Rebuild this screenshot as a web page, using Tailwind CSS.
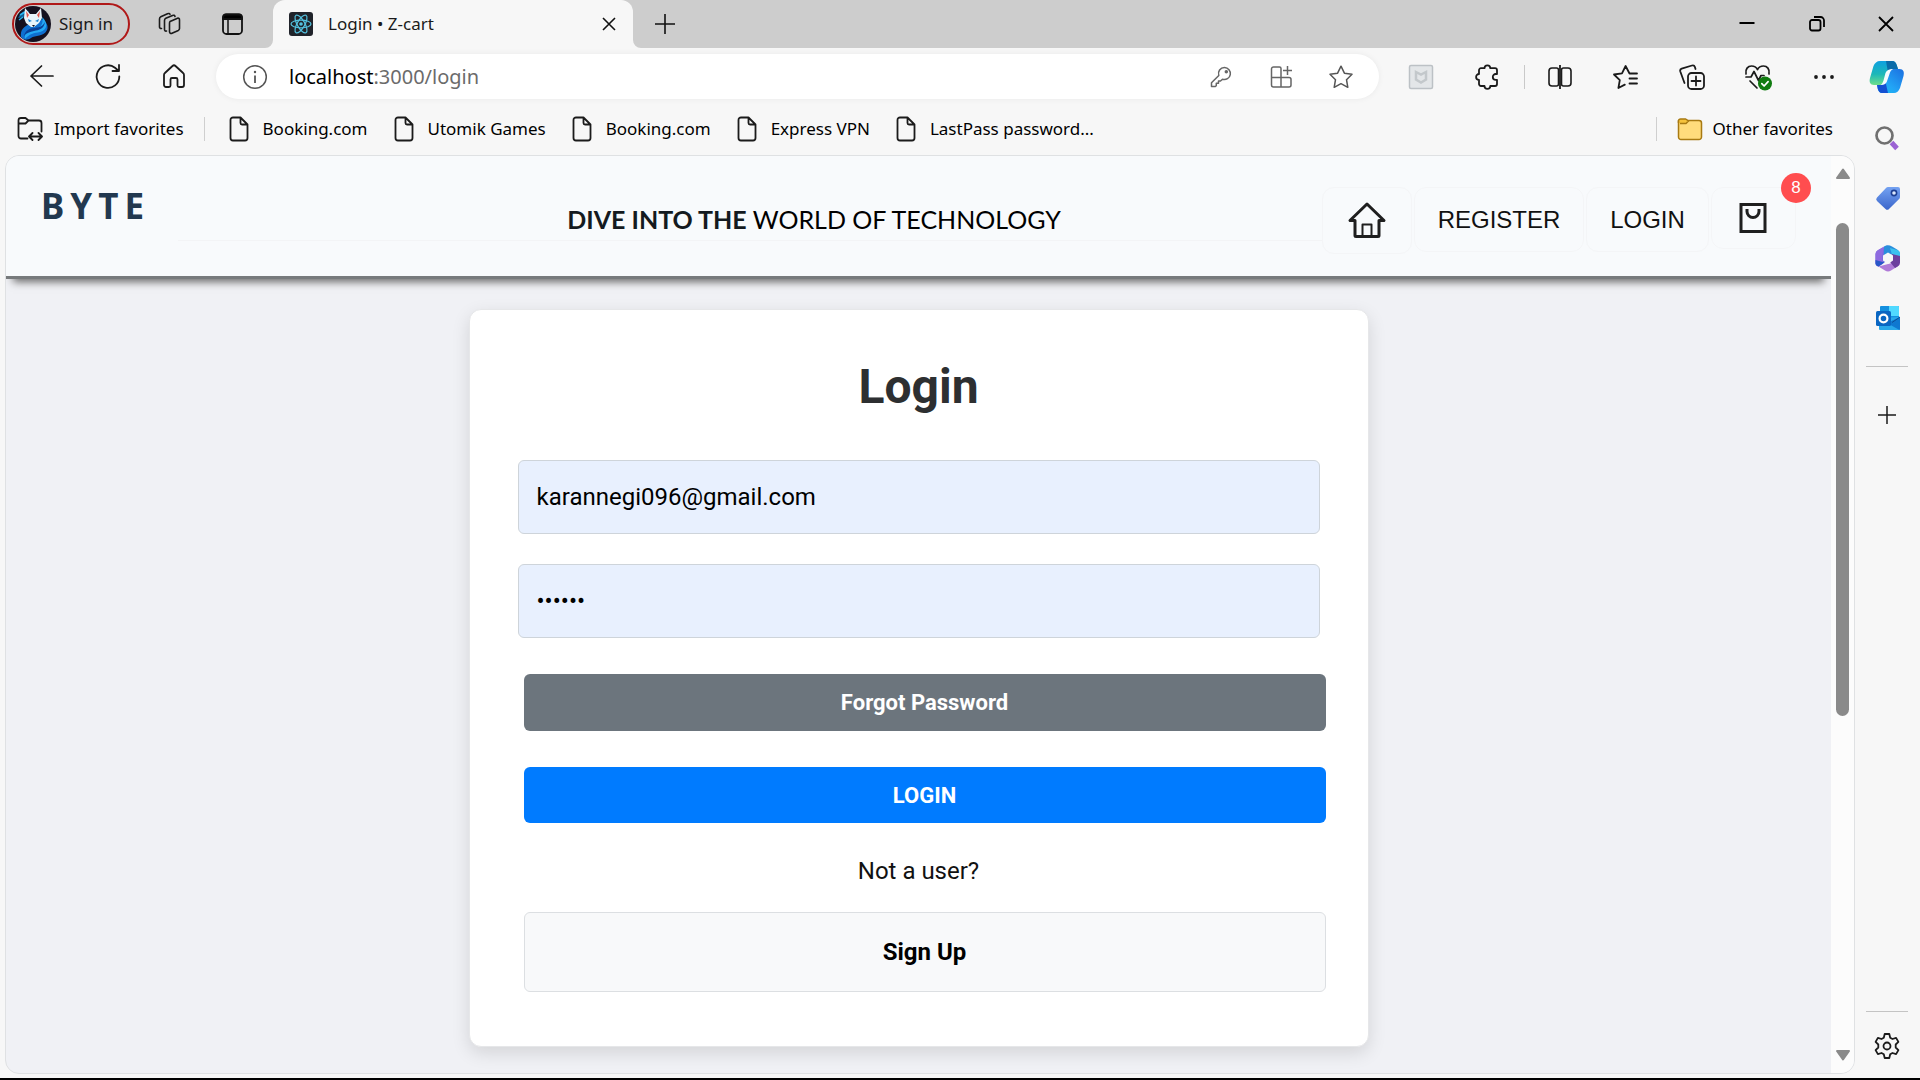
<!DOCTYPE html>
<html lang="en">
<head>
<meta charset="utf-8">
<title>Login • Z-cart</title>
<script src="https://cdn.jsdelivr.net/npm/@tailwindcss/browser@4"></script>
</head>
<body class="flex h-screen flex-col overflow-hidden border-b-2 border-black bg-[#f7f7f7] font-['Noto_Sans','Open_Sans',sans-serif] text-[17px] text-[#1b1b1b]">

<!-- Title bar -->
<header class="flex h-12 shrink-0 items-center bg-[#cdcdcd]">
  <button type="button" class="ml-3 flex h-[42px] w-[118px] shrink-0 items-center gap-2 rounded-full border-2 border-[#b01818] pl-px text-[17px]">
    <svg class="size-9 shrink-0" viewBox="0 0 36 36" aria-hidden="true">
      <defs><clipPath id="av"><circle cx="18" cy="18" r="18"/></clipPath></defs>
      <g clip-path="url(#av)">
        <rect width="36" height="36" fill="#14101f"/>
        <path d="M3 12c3-7 8-8 11-7l-4 6z" fill="#0e5f96"/>
        <path d="M5 9l5-3M4 14l4-3" stroke="#27b3ef" stroke-width="1.5"/>
        <path d="M6 31c-1-7 3-11 9-13l11-5c5 2 8 7 6 11-3 7-12 5-16 8-3 2-7 3-10-1z" fill="#0f6fd0"/>
        <path d="M27 11c6 5 6 13-2 15-6 1-11 2-15 7-1-5 2-9 8-10 7-1 11-4 9-12z" fill="#23a8f5"/>
        <path d="M9 30c1-5 5-8 11-8 5-1 8-2 10-6-1 7-6 8-11 9-4 1-8 2-10 5z" fill="#0a3f96"/>
        <path d="M10 2l5 6h6l5-6 1 10-3 5-5 4-3 0-5-4-2-5z" fill="#e8f4fb"/>
        <path d="M11 5l3 4-2 3zM25 5l-3 4 2 3z" fill="#e2574c"/>
        <path d="M13 13l4 2-3 1zM24 13l-4 2 3 1z" fill="#1b86d6"/>
        <path d="M17 19h3l-1.500 2z" fill="#14101f"/>
      </g>
    </svg>
    <span>Sign in</span>
  </button>
  <button type="button" aria-label="Workspaces" class="ml-[26px]">
    <svg class="size-[26px]" viewBox="0 0 26 26" fill="none" stroke="#1b1b1b" stroke-width="1.600" stroke-linejoin="round" stroke-linecap="round">
      <path d="M14 10.500l7-3a1.500 1.500 0 0 1 2.500 1.300v8.700c0 .9-.4 1.500-1.200 1.900l-6.300 2.900a1.700 1.700 0 0 1-2.500-1.500v-8c0-1 .1-1.900.5-2.300z"/>
      <path d="M10.500 20c-1.200.3-2-.4-2-1.500v-9c0-1.200.4-1.900 1.300-2.300l6.700-2.800c1.300-.5 2.300 0 2.500 1.100"/>
      <path d="M5.500 17.500c-1.200.2-2-.5-2-1.500v-8c0-1.200.4-1.900 1.300-2.300l6.700-3c1.200-.5 2.200-.2 2.500.6"/>
    </svg>
  </button>
  <button type="button" aria-label="Tab actions" class="ml-[37px]">
    <svg class="size-[26px]" viewBox="0 0 26 26" fill="none" stroke="#111" stroke-width="1.800">
      <rect x="4" y="3.500" width="19" height="19.500" rx="3.500"/><path d="M4 8V6.500a3 3 0 0 1 3-3h13a3 3 0 0 1 3 3V8z" fill="#000"/><path d="M9 9v14" stroke-width="1.500"/>
    </svg>
  </button>
  <div class="relative ml-[28px] flex h-12 w-[360px] shrink-0 items-center rounded-t-[12px] bg-[#f7f7f7] px-4">
    <svg class="absolute bottom-0 -left-2 size-2" viewBox="0 0 8 8" aria-hidden="true"><path d="M8 0v8H0a8 8 0 0 0 8-8z" fill="#f7f7f7"/></svg>
    <svg class="absolute -right-2 bottom-0 size-2" viewBox="0 0 8 8" aria-hidden="true"><path d="M0 0v8h8a8 8 0 0 1-8-8z" fill="#f7f7f7"/></svg>
    <svg class="size-6" viewBox="0 0 24 24" fill="none" stroke="#53c1de" stroke-width="1.200" aria-hidden="true">
      <rect width="24" height="24" rx="3" fill="#20232a" stroke="none"/>
      <ellipse cx="12" cy="12" rx="10" ry="3.800"/><ellipse cx="12" cy="12" rx="10" ry="3.800" transform="rotate(60 12 12)"/><ellipse cx="12" cy="12" rx="10" ry="3.800" transform="rotate(120 12 12)"/>
      <circle cx="12" cy="12" r="1.800" fill="#53c1de" stroke="none"/>
    </svg>
    <span class="ml-[15px] grow">Login • Z-cart</span>
    <button type="button" aria-label="Close tab"><svg class="size-4" viewBox="0 0 16 16" stroke="#111" stroke-width="1.600"><path d="M2 2l12 12M14 2L2 14"/></svg></button>
  </div>
  <button type="button" aria-label="New tab" class="ml-5"><svg class="size-6" viewBox="0 0 24 24" stroke="#111" stroke-width="1.600"><path d="M2 12h20M12 2v20"/></svg></button>
  <div class="ml-auto flex">
    <button type="button" aria-label="Minimize" class="flex w-[70px] justify-center"><svg class="size-5" viewBox="0 0 20 20" stroke="#000" stroke-width="2"><path d="M2.500 9h15"/></svg></button>
    <button type="button" aria-label="Restore" class="flex w-[70px] justify-center"><svg class="size-5" viewBox="0 0 20 20" fill="none" stroke="#000" stroke-width="1.800"><rect x="3" y="6" width="10.500" height="10.500" rx="2"/><path d="M7 3h6.500A3.500 3.500 0 0 1 17 6.500V13"/></svg></button>
    <button type="button" aria-label="Close" class="flex w-[68px] justify-center"><svg class="size-5" viewBox="0 0 20 20" stroke="#000" stroke-width="1.800"><path d="M3 3l14 14M17 3L3 17"/></svg></button>
  </div>
</header>

<div class="flex min-h-0 grow">
  <div class="flex min-w-0 grow flex-col">

    <!-- Address bar -->
    <div class="flex h-14 shrink-0 items-center pt-px pl-[9px]">
      <button type="button" aria-label="Back" class="flex w-[66px] justify-center"><svg class="size-7" viewBox="0 0 28 28" fill="none" stroke="#1b1b1b" stroke-width="1.700" stroke-linecap="round" stroke-linejoin="round"><path d="M25 13H3M13.500 3L3 13l10.500 10"/></svg></button>
      <button type="button" aria-label="Refresh" class="flex w-[66px] justify-center"><svg class="size-7" viewBox="0 0 28 28" fill="none" stroke="#1b1b1b" stroke-width="1.800" stroke-linecap="round" stroke-linejoin="round"><path d="M25.300 13.500A11.300 11.300 0 1 1 21 4.700l3.500 3M25 2v6h-6.500"/></svg></button>
      <button type="button" aria-label="Home" class="flex w-[66px] justify-center"><svg class="size-7" viewBox="0 0 28 28" fill="none" stroke="#1b1b1b" stroke-width="1.800" stroke-linejoin="round"><path d="M12.500 3a2.200 2.200 0 0 1 3 0l7.600 7c.7.600.9 1.200.9 2v10a2 2 0 0 1-2 2h-3a1.500 1.500 0 0 1-1.500-1.500v-6A1.500 1.500 0 0 0 16 15h-4a1.500 1.500 0 0 0-1.500 1.500v6A1.500 1.500 0 0 1 9 24H6a2 2 0 0 1-2-2v-10c0-.8.2-1.400.9-2z"/></svg></button>
      <div class="ml-[9px] flex h-[45px] grow items-center rounded-full bg-white pr-2 pl-[26px] shadow-[0_0_6px_rgba(0,0,0,0.06)]">
        <svg class="size-[26px] shrink-0" viewBox="0 0 26 26" fill="none" stroke="#555" stroke-width="1.500" aria-hidden="true"><circle cx="13" cy="13" r="11.300"/><path d="M13 11.500v7.500" stroke-width="1.800"/><circle cx="13" cy="8" r="1.200" fill="#555" stroke="none"/></svg>
        <span class="ml-[21px] grow text-[20px] text-[#6b6b6b]"><span class="text-black">localhost</span>:3000/login</span>
        <button type="button" aria-label="Passwords" class="flex w-[60px] justify-center"><svg class="size-6" viewBox="0 0 24 24" fill="none" stroke="#666" stroke-width="1.500" stroke-linejoin="round"><path d="M15.500 2.500a6 6 0 1 1-2 11.700L11.500 16H9.500v2.300H7.300v2.300L6.300 21.500H2.500v-3.700l7.300-7.300a6 6 0 0 1 5.700-8z"/><circle cx="17.300" cy="6.800" r="1" fill="#666"/></svg></button>
        <button type="button" aria-label="Apps" class="flex w-[60px] justify-center"><svg class="size-6" viewBox="0 0 24 24" fill="none" stroke="#666" stroke-width="1.500" stroke-linejoin="round"><path d="M12 12.500V3.500a1.500 1.500 0 0 0-1.500-1.500h-6A2 2 0 0 0 2.500 4v16a2 2 0 0 0 2 2H20a2 2 0 0 0 2-2v-5.500a2 2 0 0 0-2-2H2.500M12 12.500V22M18.500 1v9M14 5.500h9"/></svg></button>
        <button type="button" aria-label="Add to favorites" class="flex w-[60px] justify-center"><svg class="size-[26px]" viewBox="0 0 26 26" fill="none" stroke="#555" stroke-width="1.500" stroke-linejoin="round"><path d="M13 2.200l3.400 7 7.600 1.100-5.500 5.400 1.300 7.600-6.800-3.600-6.800 3.600 1.300-7.600L2 10.300l7.600-1.100z"/></svg></button>
      </div>
      <div class="ml-[9px] flex shrink-0 items-center pr-px">
        <button type="button" aria-label="Web protection" class="flex w-[66px] justify-center"><svg class="size-[26px]" viewBox="0 0 26 26" fill="none" stroke="#bcc1c5" stroke-width="1.500"><rect x="1.500" y="1.500" width="23" height="23" rx="1.500" fill="#e3e6e8"/><path d="M8 8l5 2.500L18 8v7.500L13 18.500 8 15.500z" stroke="#c3c8cb" stroke-width="2.500"/></svg></button>
        <button type="button" aria-label="Extensions" class="flex w-[66px] justify-center"><svg class="size-[26px]" viewBox="0 0 26 26" fill="none" stroke="#1b1b1b" stroke-width="1.800" stroke-linejoin="round"><path d="M10.500 4.200a2.900 2.900 0 0 1 5.800 0H21a2 2 0 0 1 2 2V10h-1.300a2.900 2.900 0 0 0 0 5.800H23v4.200a2 2 0 0 1-2 2h-4.700a2.900 2.900 0 0 1-5.800 0H7a2 2 0 0 1-2-2v-4.200a2.900 2.900 0 0 1 0-5.800V6.200a2 2 0 0 1 2-2z"/></svg></button>
        <div class="mr-[2px] ml-1 h-6 w-px bg-[#c9c9c9]"></div>
        <button type="button" aria-label="Split screen" class="flex w-[66px] justify-center"><svg class="size-[26px]" viewBox="0 0 26 26" fill="none" stroke="#1b1b1b" stroke-width="1.800" stroke-linejoin="round"><path d="M9.500 4H5a3 3 0 0 0-3 3v12a3 3 0 0 0 3 3h4.500a2 2 0 0 0 2-2V6a2 2 0 0 0-2-2zM16.500 4H21a3 3 0 0 1 3 3v12a3 3 0 0 1-3 3h-4.500a2 2 0 0 1-2-2V6a2 2 0 0 1 2-2z" stroke-width="1.600"/><path d="M13 1v24"/></svg></button>
        <button type="button" aria-label="Favorites" class="flex w-[66px] justify-center"><svg class="size-[26px]" viewBox="0 0 26 26" fill="none" stroke="#1b1b1b" stroke-width="1.800" stroke-linejoin="round" stroke-linecap="round"><path d="M24 9.500h-7.500L12.600 2 9 9.300l-8 1.200 5.800 5.600L5.400 24l6.400-3.400M16.500 14.500H24M16.500 19.500H24"/></svg></button>
        <button type="button" aria-label="Collections" class="flex w-[66px] justify-center"><svg class="size-[26px]" viewBox="0 0 26 26" fill="none" stroke="#1b1b1b" stroke-width="1.800" stroke-linejoin="round" stroke-linecap="round"><rect x="9" y="9" width="16" height="16" rx="3.500"/><path d="M17 12.500v9M12.500 17h9M5.500 19L1.300 7.500c-.4-1.300.2-2.400 1.400-2.800L13 1.500c1.400-.4 2.500.3 2.900 1.500L16.500 5"/></svg></button>
        <button type="button" aria-label="Browser essentials" class="flex w-[66px] justify-center"><svg class="size-7" viewBox="0 0 28 28" fill="none" stroke="#1b1b1b" stroke-width="1.700" stroke-linejoin="round" stroke-linecap="round"><path d="M2 11C1 6 4 3 7.500 3 10.500 3 12.500 4.500 13.500 6.500 14.500 4.500 16.500 3 19.500 3 23 3 26 6 25 11M2 14h5l3-5.500 4.500 9 2.500-5h3M6 18l7 7"/><circle cx="21" cy="20.500" r="7" fill="#107c10" stroke="none"/><path d="M17.800 20.700l2.300 2.300 4-4.300" stroke="#fff"/></svg></button>
        <button type="button" aria-label="Settings and more" class="flex w-[66px] justify-center"><svg class="size-6" viewBox="0 0 24 24" fill="#1b1b1b"><circle cx="4" cy="12" r="1.900"/><circle cx="12" cy="12" r="1.900"/><circle cx="20" cy="12" r="1.900"/></svg></button>
      </div>
    </div>

    <!-- Favorites bar -->
    <nav aria-label="Favorites bar" class="flex h-[51px] shrink-0 items-center pb-px pr-[25px] pl-[17px] whitespace-nowrap text-black">
      <button type="button" class="flex items-center gap-[11px]"><svg class="size-[26px]" viewBox="0 0 26 26" fill="none" stroke="#1b1b1b" stroke-width="1.800" stroke-linejoin="round" stroke-linecap="round"><path d="M10.500 22.500H4a2.500 2.500 0 0 1-2.500-2.500V4.500A2.500 2.500 0 0 1 4 2h4.500l3 2.500H22A2.500 2.500 0 0 1 24.500 7v8.500M1.500 7.500h7l3-3M12.500 20.500h12M15.500 17l-3.500 3.500 3.500 3.500M21.500 17l3.500 3.500-3.500 3.500"/></svg>Import favorites</button>
      <div class="mr-[24px] ml-[20px] h-6 w-px bg-[#cfcfcf]"></div>
      <div class="flex gap-[26px]">
        <a href="#" class="flex items-center gap-[14px]"><svg class="h-[26px] w-5" viewBox="0 0 20 26" fill="none" stroke="#1b1b1b" stroke-width="1.800" stroke-linejoin="round"><path d="M11.500 1.500H4a2.500 2.500 0 0 0-2.500 2.500v18A2.500 2.500 0 0 0 4 24.500h12a2.500 2.500 0 0 0 2.500-2.500V8.500zM11.500 1.500V7a1.500 1.500 0 0 0 1.500 1.500h5.500"/></svg>Booking.com</a>
        <a href="#" class="flex items-center gap-[14px]"><svg class="h-[26px] w-5" viewBox="0 0 20 26" fill="none" stroke="#1b1b1b" stroke-width="1.800" stroke-linejoin="round"><path d="M11.500 1.500H4a2.500 2.500 0 0 0-2.500 2.500v18A2.500 2.500 0 0 0 4 24.500h12a2.500 2.500 0 0 0 2.500-2.500V8.500zM11.500 1.500V7a1.500 1.500 0 0 0 1.500 1.500h5.500"/></svg>Utomik Games</a>
        <a href="#" class="flex items-center gap-[14px]"><svg class="h-[26px] w-5" viewBox="0 0 20 26" fill="none" stroke="#1b1b1b" stroke-width="1.800" stroke-linejoin="round"><path d="M11.500 1.500H4a2.500 2.500 0 0 0-2.500 2.500v18A2.500 2.500 0 0 0 4 24.500h12a2.500 2.500 0 0 0 2.500-2.500V8.500zM11.500 1.500V7a1.500 1.500 0 0 0 1.500 1.500h5.500"/></svg>Booking.com</a>
        <a href="#" class="flex items-center gap-[14px]"><svg class="h-[26px] w-5" viewBox="0 0 20 26" fill="none" stroke="#1b1b1b" stroke-width="1.800" stroke-linejoin="round"><path d="M11.500 1.500H4a2.500 2.500 0 0 0-2.500 2.500v18A2.500 2.500 0 0 0 4 24.500h12a2.500 2.500 0 0 0 2.500-2.500V8.500zM11.500 1.500V7a1.500 1.500 0 0 0 1.500 1.500h5.500"/></svg>Express VPN</a>
        <a href="#" class="flex items-center gap-[14px]"><svg class="h-[26px] w-5" viewBox="0 0 20 26" fill="none" stroke="#1b1b1b" stroke-width="1.800" stroke-linejoin="round"><path d="M11.500 1.500H4a2.500 2.500 0 0 0-2.500 2.500v18A2.500 2.500 0 0 0 4 24.500h12a2.500 2.500 0 0 0 2.500-2.500V8.500zM11.500 1.500V7a1.500 1.500 0 0 0 1.500 1.500h5.500"/></svg>LastPass password...</a>
      </div>
      <div class="mr-[20px] ml-auto h-6 w-px bg-[#cfcfcf]"></div>
      <button type="button" class="flex items-center gap-[9px]"><svg class="size-[26px]" viewBox="0 0 26 26" fill="#ffdc7c" stroke="#a87a12" stroke-width="1.500" stroke-linejoin="round"><path d="M1.500 4.500V21A2.500 2.500 0 0 0 4 23.500h18a2.500 2.500 0 0 0 2.500-2.500V7A2.500 2.500 0 0 0 22 4.500H11.500z"/><path d="M1.500 7V5A2 2 0 0 1 3.500 3h5.200l2.800 2L9 7.500H3" fill="#f5c23b"/></svg>Other favorites</button>
    </nav>

    <!-- Page viewport -->
    <div class="mr-[3px] mb-1 ml-[5px] flex min-h-0 grow overflow-hidden rounded-[14px] border border-[#dfe1e3] bg-[#f0f1f5]">
      <div class="min-w-0 grow overflow-hidden">
        <div class="flex h-[123px] items-start border-b-[3px] border-[#777a7c] bg-[#f8fafc] pr-[35px] shadow-[0_10px_8px_-7px_#6b6b6b]">
          <a href="#" class="mt-[25px] w-[172px] pl-[35px] font-['Noto_Sans',sans-serif] text-[35px] leading-[50px] font-bold tracking-[6px] text-[#22384f]">BYTE</a>
          <div class="mt-[43px] h-[42px] grow border-b border-[#f3f4f6] pl-[128px] text-center font-['Lato',sans-serif] text-[25px] leading-[40px] whitespace-nowrap text-black"><b class="text-[#141a20]">DIVE INTO THE</b> WORLD OF TECHNOLOGY</div>
          <nav aria-label="Site" class="mt-[31px] flex items-start gap-[2px] font-['Liberation_Sans',sans-serif] text-[24px] text-[#111]">
            <a href="#" aria-label="Home" class="flex h-[67px] w-[90px] items-center justify-center rounded-[12px] border border-[#f4f5f7]"><svg class="size-10" viewBox="0 0 40 40" fill="none" stroke="#1f1f1f" stroke-width="3" stroke-linejoin="round" stroke-linecap="round"><path d="M3 19.500L20 3l17 16.500M3.500 19.500H8V34.500a1 1 0 0 0 1 1h22a1 1 0 0 0 1-1V19.500h4.500"/><path d="M15.500 35V23.500h9V35" stroke-width="2"/></svg></a>
            <a href="#" class="flex h-[65px] w-[170px] items-center justify-center rounded-[12px] border border-[#f4f5f7]">REGISTER</a>
            <a href="#" class="flex h-[65px] w-[123px] items-center justify-center rounded-[12px] border border-[#f4f5f7]">LOGIN</a>
            <a href="#" aria-label="Cart" class="relative flex h-[62px] w-[85px] items-center justify-center rounded-[12px] border border-[#f4f5f7]"><svg class="size-8" viewBox="0 0 32 32" fill="none" stroke="#1f1f1f" stroke-width="3"><rect x="3" y="2.500" width="24" height="27"/><path d="M9 7v2.500a6 6 0 0 0 12 0V7"/></svg>
              <span class="absolute -top-[15px] -right-4 flex size-[30px] items-center justify-center rounded-full bg-[#ff4d4f] text-[17px] text-white">8</span></a>
          </nav>
        </div>

        <main class="px-4 pt-[30px] font-['Roboto',sans-serif] text-[24px] text-[#111]">
          <form class="mx-auto flex max-w-[900px] flex-col rounded-[12px] border border-[#e6e7e9] bg-white px-12 pt-[49px] pb-[54px] shadow-[0_6px_18px_rgba(0,0,0,0.12)]">
            <h1 class="text-center text-[48px] leading-[56px] font-bold text-[#2d2f31]">Login</h1>
            <input aria-label="Email" type="email" value="karannegi096@gmail.com" class="mt-[45px] h-[74px] rounded-[6px] border border-[#ced4da] bg-[#e8f0fe] px-[18px] text-black">
            <input aria-label="Password" type="password" value="secret" class="mt-[30px] h-[74px] rounded-[6px] border border-[#ced4da] bg-[#e8f0fe] px-[18px] text-black">
            <button type="button" class="mt-[36px] -mr-[6px] ml-[6px] h-[57px] rounded-[6px] bg-[#6c757d] text-[22px] font-bold text-white">Forgot Password</button>
            <button type="submit" class="mt-[36px] -mr-[6px] ml-[6px] h-[56px] rounded-[6px] bg-[#007bff] text-[22px] font-bold text-white">LOGIN</button>
            <p class="mt-[30px] text-center leading-[36px]">Not a user?</p>
            <button type="button" class="mt-[23px] -mr-[6px] ml-[6px] h-[80px] rounded-[6px] border border-[#dcdfe2] bg-[#f8f9fa] font-bold text-black">Sign Up</button>
          </form>
        </main>
      </div>
      <div class="flex w-[23px] shrink-0 flex-col items-center bg-[#fcfcfc] py-3" aria-hidden="true">
        <svg class="h-3 w-4" viewBox="0 0 16 12"><path d="M8 1.500l6 8.500H2z" fill="#8a8a8a" stroke="#8a8a8a" stroke-width="2" stroke-linejoin="round"/></svg>
        <div class="mt-[43px] h-[493px] w-[13px] rounded-full bg-[#8a8a8a]"></div>
        <svg class="mt-auto h-3 w-4" viewBox="0 0 16 12"><path d="M8 10.500L2 2h12z" fill="#8a8a8a" stroke="#8a8a8a" stroke-width="2" stroke-linejoin="round"/></svg>
      </div>
    </div>
  </div>

  <!-- Sidebar -->
  <aside class="flex w-[62px] shrink-0 flex-col items-center pt-[11px] pr-1 pb-[18px]">
    <button type="button" aria-label="Copilot"><svg class="size-9" viewBox="0 0 36 36">
      <defs>
        <linearGradient id="c1" x1="0" y1="0" x2="0" y2="1"><stop offset="0" stop-color="#0fa0e0"/><stop offset=".55" stop-color="#1cb8b8"/><stop offset="1" stop-color="#6ddf8a"/></linearGradient>
        <linearGradient id="c2" x1="1" y1="0" x2="0" y2="1"><stop offset="0" stop-color="#1c6fe0"/><stop offset=".6" stop-color="#22a4f5"/><stop offset="1" stop-color="#19c0f0"/></linearGradient>
      </defs>
      <path d="M15 2h8c3 0 4 2 4.700 4l1.300 4h-5c-3 0-4.500 2-5.500 5l-2.500 8c-.9 2-2 3-4.500 3H5c-4 0-5-3-4-7L4.500 7C5.500 4 8 2 11 2z" fill="url(#c1)"/>
      <path d="M17 2h6c3 0 4 2 4.700 4l1.300 4h-5c-2.500 0-4 1.200-5 3.500z" fill="#0b6ba8"/>
      <path d="M21 34h-8c-2.500 0-3.500-2-4.200-4l-.8-4h4c2.500 0 3.700-1 4.500-3l3-9c1-3 2.500-4 5-4h6c4 0 5 3 4 7l-3.500 12c-1 3-3.500 5-6 5z" fill="url(#c2)"/>
      <path d="M19 34h-6c-2.500 0-3.500-2-4.200-4l-.8-4h4c2.500 0 3.700-1 4.500-3z" fill="#1450d2"/>
      <path d="M16.500 14c1-2.700 3.500-4 7.500-4-2 1-2.800 2.800-3.600 5.200l-2.600 7.600c-.9 2.300-3 3.200-6.300 3.200 1.600-1 2.200-2.200 3-4.500z" fill="#f4fbff"/>
    </svg></button>
    <button type="button" aria-label="Search" class="mt-[30px]"><svg class="size-[26px]" viewBox="0 0 26 26" fill="none"><circle cx="10.500" cy="10.500" r="8" stroke="#707070" stroke-width="2.700"/><path d="M17.500 17.500l5.500 6" stroke="#9b62d3" stroke-width="5"/></svg></button>
    <button type="button" aria-label="Shopping" class="mt-[34px] ml-px"><svg class="size-[26px]" viewBox="0 0 26 26"><defs><linearGradient id="t" x1="0" y1="0" x2="0" y2="1"><stop offset="0" stop-color="#74a2f2"/><stop offset="1" stop-color="#3b66cb"/></linearGradient></defs><path d="M13 2h10a2 2 0 0 1 2 2v8a3 3 0 0 1-.9 2.100L14 24a2.500 2.500 0 0 1-3.500 0L2 16a2.500 2.500 0 0 1 0-3.500L11 3a3 3 0 0 1 2-1z" fill="url(#t)"/><circle cx="19" cy="8" r="2.600" fill="#dce8fc" stroke="#1d3f94" stroke-width="1.600"/></svg></button>
    <button type="button" aria-label="Microsoft 365" class="mt-[33px] ml-px"><svg class="size-7" viewBox="0 0 28 28"><path d="M14 1L3.500 6.500A4 4 0 0 0 1.500 10v9a3.500 3.500 0 0 0 3 3.500L11 18V4z" fill="#6f6fe0"/><path d="M10 2.500L4 6a5 5 0 0 0-2.500 4v9a3.500 3.500 0 0 0 3 3.500l4-2.500V10z" fill="#8f6be0"/><path d="M10 2.500C13 .8 15 .8 18 2.500l5.500 3.300a5 5 0 0 1 2.500 4V15l-8-4.500-8 3z" fill="#2a8fdc"/><path d="M18 10.500l8 5.500V9.800a4 4 0 0 0-2-3.500L16 4z" fill="#3cc1ee"/><path d="M26 14v4.500a5 5 0 0 1-2.500 4L17 26.500c-2 1.200-4 1.200-6 0l-6.500-4L18 19z" fill="#b07ad8"/><path d="M26 12v6.500a5 5 0 0 1-2.500 4L21 24l-5-6 2-8z" fill="#6d3f9e"/><path d="M4.500 22.500C2.500 22 1.500 21 1.500 19v-3l9 2.500z" fill="#2857c8"/><path d="M14 8.500l5 3v5l-5 3.500-5-3.500v-5z" fill="#f7f7f7"/></svg></button>
    <button type="button" aria-label="Outlook" class="mt-[33px] ml-px"><svg class="size-[26px]" viewBox="0 0 26 26"><path d="M6 1h17a1 1 0 0 1 1 1v12H5V2a1 1 0 0 1 1-1z" fill="#1490df"/><path d="M14 1h9a1 1 0 0 1 1 1v9H14z" fill="#50d9ff"/><path d="M4 13l21-1v12a1 1 0 0 1-1 1H5a1 1 0 0 1-1-1z" fill="#28a8ea"/><path d="M25 12v12a1 1 0 0 1-.5.900L12 18z" fill="#0f78d0"/><path d="M25 12l-8 5.500" stroke="#0a4f96"/><rect x="1" y="6" width="15" height="15" rx="1.500" fill="#0a66c2"/><circle cx="8.500" cy="13.500" r="3.900" fill="none" stroke="#fff" stroke-width="2.200"/></svg></button>
    <div class="mt-[35px] h-px w-[42px] bg-[#c4c4c4]"></div>
    <button type="button" aria-label="Customize sidebar" class="mt-[38px]"><svg class="size-5" viewBox="0 0 20 20" stroke="#1b1b1b" stroke-width="1.500"><path d="M1 10h18M10 1v18"/></svg></button>
    <div class="mt-auto h-px w-[42px] bg-[#c4c4c4]"></div>
    <button type="button" aria-label="Settings" class="mt-[20px]"><svg class="size-7" viewBox="0 0 28 28" fill="none" stroke="#1b1b1b" stroke-width="1.800" stroke-linejoin="round"><path d="M11.700 2h4.600l.9 3.700 2.300 1.300 3.600-1.100 2.300 4-2.700 2.600v3l2.700 2.600-2.300 4-3.600-1.100-2.300 1.300-.9 3.700h-4.600l-.9-3.700L8.500 21l-3.600 1.100-2.300-4 2.700-2.600v-3L2.600 9.900l2.300-4L8.500 7l2.300-1.300z"/><circle cx="14" cy="14" r="3.500"/></svg></button>
  </aside>
</div>
</body>
</html>
